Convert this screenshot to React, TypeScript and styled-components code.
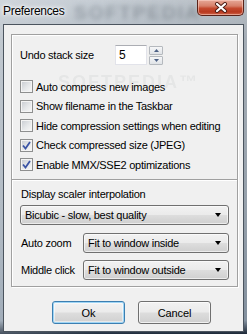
import React from 'react';
import styled, { createGlobalStyle } from 'styled-components';

const GlobalStyle = createGlobalStyle`
  html, body {
    margin: 0;
    padding: 0;
  }
  body {
    width: 247px;
    height: 334px;
    overflow: hidden;
    font-family: "Liberation Sans", Arial, sans-serif;
    font-size: 11px;
    color: #000;
  }
`;

const Window = styled.div`
  position: relative;
  width: 247px;
  height: 334px;
  display: flex;
  flex-direction: column;
  overflow: hidden;
  background:
    linear-gradient(90deg, rgba(255,255,255,0.18), rgba(255,255,255,0) 40%, rgba(0,0,0,0.08) 100%),
    linear-gradient(180deg, #c6cdd4 0%, #b3bcc5 12%, #a3aeb9 60%, #8e9cab 96%, #1f2c3c 100%);
`;

const TitleBar = styled.div`
  height: 24px;
  flex: none;
  display: flex;
  justify-content: space-between;
  align-items: flex-start;
  padding-left: 3px;
`;

const Title = styled.span`
  position: relative;
  z-index: 1;
  margin-top: 3px;
  font-size: 12px;
  line-height: 16px;
  letter-spacing: -0.3px;
  color: #000;
  text-shadow: 0 0 6px #fff, 0 0 4px #fff, 0 0 2px #fff;
`;

const CloseButton = styled.div`
  position: relative;
  z-index: 1;
  width: 47px;
  height: 16px;
  margin-right: 3px;
  box-sizing: border-box;
  display: flex;
  align-items: center;
  justify-content: center;
  border: 1px solid #5a2218;
  border-top: none;
  border-radius: 0 0 5px 5px;
  background: linear-gradient(180deg, #e6a897 0%, #d7806a 40%, #c44a2f 55%, #b8391f 80%, #d0674c 100%);
  box-shadow: inset 0 0 0 1px rgba(255, 220, 210, 0.5);
`;

const Client = styled.div`
  flex: 1;
  margin: 0 3px 2px 3px;
  border: 1px solid #4b545e;
  background: #f0f0f0;
  padding: 9px 0 0 7px;
  display: flex;
  flex-direction: column;
`;

const GroupBox = styled.div`
  width: 225px;
  height: 251px;
  border: 1px solid #a0a0a0;
  box-shadow: inset 1px 1px 0 #fff, 1px 1px 0 #fff;
  display: flex;
  flex-direction: column;
`;

const Section = styled.div<{ $top: number }>`
  padding: ${p => p.$top}px 7px 0 8px;
  display: flex;
  flex-direction: column;
`;

const UndoRow = styled.div`
  display: flex;
  align-items: center;
  height: 20px;
  margin-bottom: 12px;
`;

const UndoLabel = styled.span`
  width: 95px;
  letter-spacing: -0.25px;
`;

const SpinInput = styled.div`
  width: 32px;
  height: 20px;
  box-sizing: border-box;
  background: #fff;
  border: 1px solid #e2e3ea;
  border-top-color: #abadb3;
  padding: 3px 0 0 3px;
  font-size: 12px;
  line-height: 13px;
`;

const SpinButtons = styled.div`
  margin-left: 2px;
  display: flex;
  flex-direction: column;
  gap: 1px;
`;

const SpinButton = styled.div`
  width: 14px;
  height: 9px;
  box-sizing: border-box;
  border: 1px solid #b5b9be;
  border-radius: 1px;
  background: linear-gradient(180deg, #f6f7f8, #e0e3e7);
  display: flex;
  align-items: center;
  justify-content: center;
`;

const CheckRow = styled.label`
  height: 19.5px;
  display: flex;
  align-items: center;
  gap: 3px;
  letter-spacing: -0.25px;
  white-space: nowrap;
`;

const Box = styled.span`
  width: 13px;
  height: 13px;
  box-sizing: border-box;
  flex: none;
  border: 1px solid #8e8f8f;
  background: linear-gradient(135deg, #c6cad0 0%, #e6e8ea 55%, #f8f8f8 100%);
  box-shadow: inset 0 0 0 1px #f4f4f4;
  display: flex;
  align-items: center;
  justify-content: center;
`;

const Divider = styled.div`
  margin-top: 4px;
  border-top: 1px solid #a0a0a0;
  border-bottom: 1px solid #fff;
`;

const Caption = styled.div`
  margin-left: 1px;
  height: 14px;
  line-height: 14px;
  letter-spacing: -0.25px;
`;

const FieldRow = styled.div<{ $top: number }>`
  margin-top: ${p => p.$top}px;
  display: flex;
  align-items: center;
`;

const FieldLabel = styled.span`
  width: 62px;
  margin-left: 1px;
  letter-spacing: -0.25px;
  white-space: nowrap;
`;

const Combo = styled.div<{ $width: number }>`
  width: ${p => p.$width}px;
  height: 20px;
  box-sizing: border-box;
  border: 1px solid #707070;
  border-radius: 3px;
  background: linear-gradient(180deg, #f2f2f2 0%, #ebebeb 48%, #dddddd 52%, #cfcfcf 100%);
  box-shadow: inset 0 0 0 1px rgba(255, 255, 255, 0.6);
  display: flex;
  align-items: center;
  justify-content: space-between;
  padding: 0 7px 0 4px;
  letter-spacing: -0.25px;
  white-space: nowrap;
`;

const Arrow = styled.span`
  width: 0;
  height: 0;
  border-left: 3.5px solid transparent;
  border-right: 3.5px solid transparent;
  border-top: 4px solid #000;
`;

const ButtonRow = styled.div`
  margin-top: 14px;
  padding-left: 41px;
  display: flex;
  gap: 13px;
`;

const Button = styled.div<{ $default?: boolean }>`
  width: 73px;
  height: 23px;
  box-sizing: border-box;
  border: 1px solid ${p => (p.$default ? '#3c7fb1' : '#707070')};
  border-radius: 3px;
  background: linear-gradient(180deg, #f2f2f2 0%, #ebebeb 48%, #dddddd 52%, #cfcfcf 100%);
  box-shadow: ${p =>
    p.$default
      ? 'inset 0 0 0 1px #9fd5f5, inset 0 0 0 2px rgba(255,255,255,0.5)'
      : 'inset 0 0 0 1px rgba(255,255,255,0.7)'};
  display: flex;
  align-items: center;
  justify-content: center;
  font-size: 11px;
  letter-spacing: -0.1px;
`;

const Watermark = styled.div<{ $x: number; $y: number; $size: number; $alpha: number; $blur: number }>`
  position: absolute;
  left: ${p => p.$x}px;
  top: ${p => p.$y}px;
  font-size: ${p => p.$size}px;
  font-weight: bold;
  letter-spacing: 2px;
  color: rgba(40, 50, 60, ${p => p.$alpha});
  filter: blur(${p => p.$blur}px);
  pointer-events: none;
  white-space: nowrap;
`;

function Check() {
  return (
    <svg width="9" height="9" viewBox="0 0 9 9">
      <path d="M1 4.5 L3.5 7.5 L8 1" fill="none" stroke="#3b54a5" strokeWidth="1.8" />
    </svg>
  );
}

function CheckBox({ label, checked }: { label: string; checked?: boolean }) {
  return (
    <CheckRow>
      <Box>{checked && <Check />}</Box>
      {label}
    </CheckRow>
  );
}

const options = [
  { label: 'Auto compress new images', checked: false },
  { label: 'Show filename in the Taskbar', checked: false },
  { label: 'Hide compression settings when editing', checked: false },
  { label: 'Check compressed size (JPEG)', checked: true },
  { label: 'Enable MMX/SSE2 optimizations', checked: true },
];

export default function App() {
  return (
    <>
      <GlobalStyle />
      <Window>
        <Watermark $x={74} $y={2} $size={19} $alpha={0.28} $blur={2.5}>SOFTPEDIA</Watermark>
        <TitleBar>
          <Title>Preferences</Title>
          <CloseButton>
            <svg width="14" height="11" viewBox="0 0 14 11">
              <path d="M3 2 L11 9 M11 2 L3 9" stroke="#4a1a12" strokeWidth="4" strokeLinecap="round" />
              <path d="M3 2 L11 9 M11 2 L3 9" stroke="#fff" strokeWidth="2.2" strokeLinecap="round" />
            </svg>
          </CloseButton>
        </TitleBar>
        <Client>
          <GroupBox>
            <Section $top={10}>
              <UndoRow>
                <UndoLabel>Undo stack size</UndoLabel>
                <SpinInput>5</SpinInput>
                <SpinButtons>
                  <SpinButton>
                    <svg width="5" height="3" viewBox="0 0 5 3"><path d="M0 3 L2.5 0 L5 3 Z" fill="#4d6185" /></svg>
                  </SpinButton>
                  <SpinButton>
                    <svg width="5" height="3" viewBox="0 0 5 3"><path d="M0 0 L2.5 3 L5 0 Z" fill="#4d6185" /></svg>
                  </SpinButton>
                </SpinButtons>
              </UndoRow>
              {options.map(o => (
                <CheckBox key={o.label} label={o.label} checked={o.checked} />
              ))}
            </Section>
            <Divider />
            <Section $top={6}>
              <Caption>Display scaler interpolation</Caption>
              <FieldRow $top={4}>
                <Combo $width={209}>
                  <span>Bicubic - slow, best quality</span>
                  <Arrow />
                </Combo>
              </FieldRow>
              <FieldRow $top={8}>
                <FieldLabel>Auto zoom</FieldLabel>
                <Combo $width={146}>
                  <span>Fit to window inside</span>
                  <Arrow />
                </Combo>
              </FieldRow>
              <FieldRow $top={7}>
                <FieldLabel>Middle click</FieldLabel>
                <Combo $width={146}>
                  <span>Fit to window outside</span>
                  <Arrow />
                </Combo>
              </FieldRow>
            </Section>
          </GroupBox>
          <ButtonRow>
            <Button $default>Ok</Button>
            <Button>Cancel</Button>
          </ButtonRow>
        </Client>
        <Watermark $x={58} $y={72} $size={18} $alpha={0.05} $blur={0}>SOFTPEDIA™</Watermark>
      </Window>
    </>
  );
}
